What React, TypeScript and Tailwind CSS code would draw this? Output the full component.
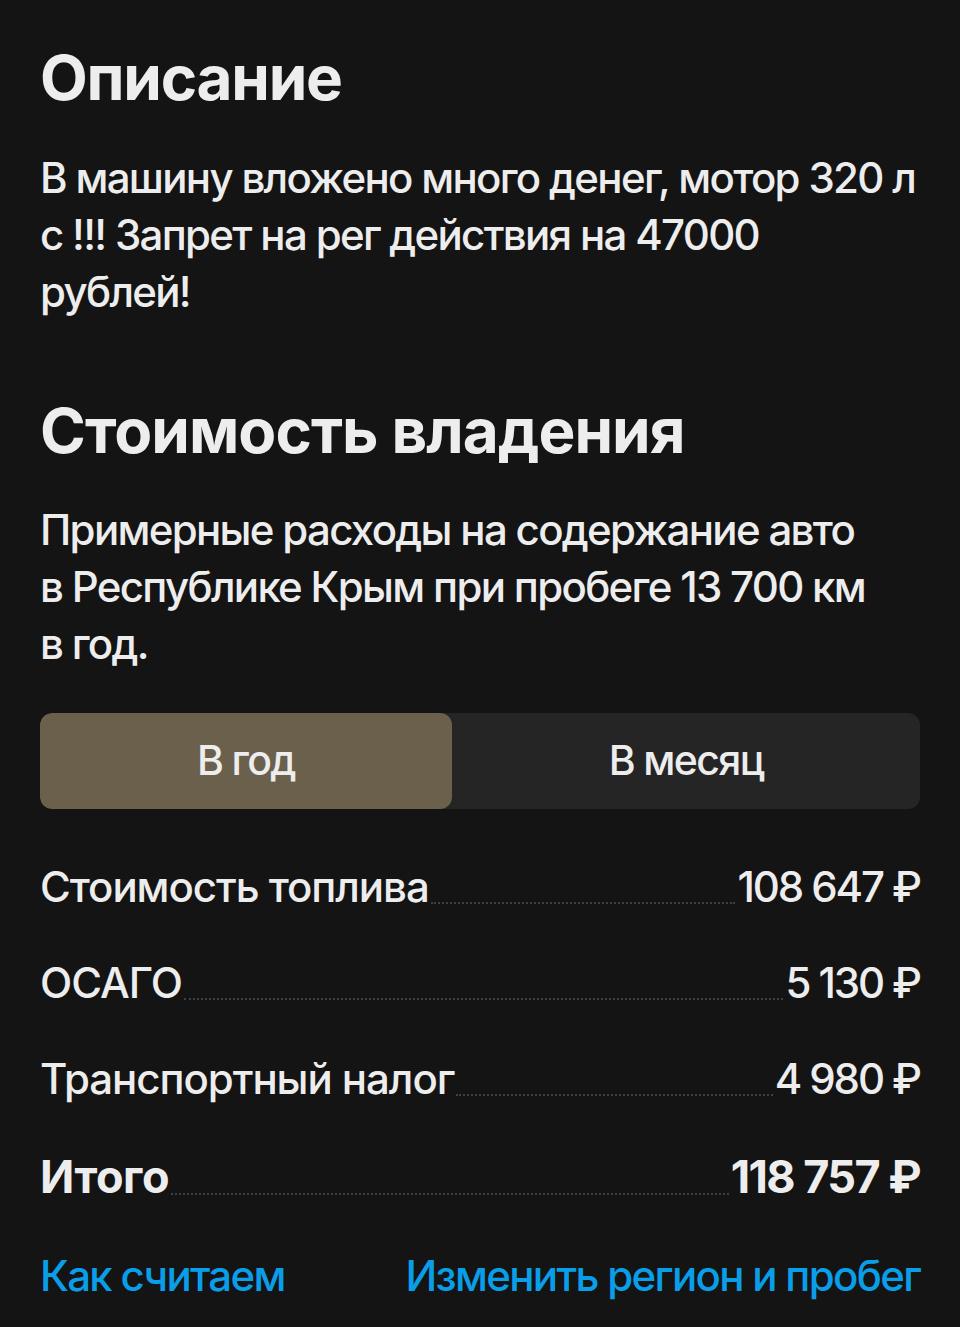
import { useState } from 'react';

interface CostRow {
  label: string;
  value: string;
  total?: boolean;
}

const rows: CostRow[] = [
  { label: 'Стоимость топлива', value: '108 647 ₽' },
  { label: 'ОСАГО', value: '5 130 ₽' },
  { label: 'Транспортный налог', value: '4 980 ₽' },
  { label: 'Итого', value: '118 757 ₽', total: true },
];

function Row({ label, value, total }: CostRow) {
  return (
    <div className={`flex items-end h-[96px] ${total ? 'pb-[19px]' : 'pb-[22px]'}`}>
      <span
        className={`shrink-0 leading-none ${total ? 'text-[45px] font-bold tracking-[-0.01em]' : 'text-[42px] font-medium tracking-[-0.025em]'}`}
      >
        {label}
      </span>
      <span className="flex-1 mx-[2px] mb-[4px] border-b-2 border-dotted border-[#404040]" />
      <span
        className={`shrink-0 leading-none ${total ? 'text-[45px] font-bold tracking-[-0.035em]' : 'text-[42px] font-medium tracking-[-0.05em]'}`}
      >
        {value}
      </span>
    </div>
  );
}

export default function App() {
  const [period, setPeriod] = useState<'year' | 'month'>('year');

  return (
    <div
      className="min-h-[1327px] bg-[#141414] text-[#ededed] px-[40px] pt-[38px]"
      style={{ fontFamily: 'Inter, "Noto Sans", sans-serif' }}
    >
      {/* Описание */}
      <h2 className="text-[62px] font-bold leading-[80px] tracking-[-0.02em]">Описание</h2>
      <p className="mt-[31px] max-w-[877px] text-[42px] font-medium leading-[57px] tracking-[-0.04em]">
        В машину вложено много денег, мотор 320 л с !!! Запрет на рег действия на 47000 рублей!
      </p>

      {/* Стоимость владения */}
      <h2 className="mt-[71px] text-[62px] font-bold leading-[80px] tracking-[-0.015em]">Стоимость владения</h2>
      <p className="mt-[30px] text-[42px] font-medium leading-[57px] tracking-[-0.04em] pr-[40px]">
        Примерные расходы на содержание авто в Республике Крым при пробеге 13 700 км в год.
      </p>

      <div className="mt-[41px] flex h-[96px] rounded-[12px] bg-[#252525] overflow-hidden">
        <button
          onClick={() => setPeriod('year')}
          className={`w-[412px] rounded-[12px] text-[41px] font-medium tracking-[-0.04em] ${period === 'year' ? 'bg-[#6b604b]' : ''}`}
        >
          В год
        </button>
        <button
          onClick={() => setPeriod('month')}
          className={`flex-1 rounded-[12px] text-[41px] font-medium tracking-[-0.04em] ${period === 'month' ? 'bg-[#6b604b]' : ''}`}
        >
          В месяц
        </button>
      </div>

      <div className="mt-[25px]">
        {rows.map((r) => (
          <Row key={r.label} {...r} />
        ))}
      </div>

      <div className="mt-[26px] flex justify-between text-[42px] font-medium tracking-[-0.04em] text-[#0a9de8]">
        <a href="#">Как считаем</a>
        <a href="#">Изменить регион и пробег</a>
      </div>
    </div>
  );
}
